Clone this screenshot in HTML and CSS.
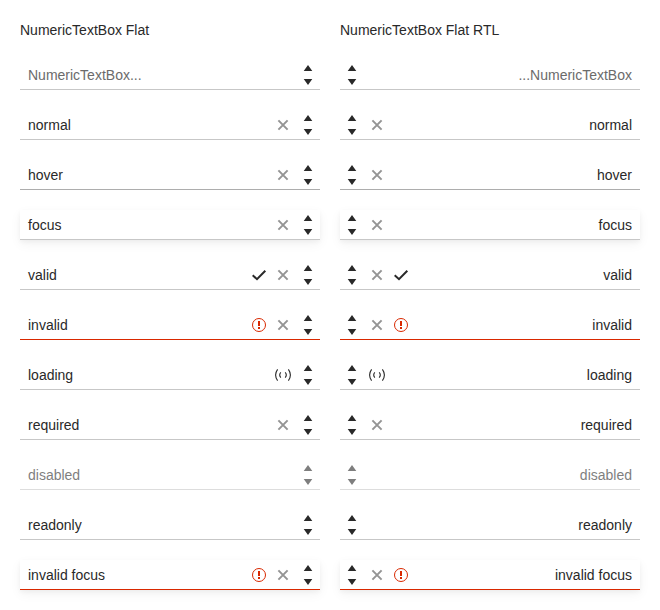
FILE: index.html
```
<!DOCTYPE html>
<html lang="en">
<head>
<meta charset="utf-8">
<title>NumericTextBox Flat</title>
<link rel="stylesheet" href="styles.css">
</head>
<body>
<svg class="sprite" aria-hidden="true">
  <symbol id="spin" viewBox="0 0 24 28"><path d="M12 4L16.3 10H7.7ZM7.7 18H16.3L12 24Z" fill="currentColor"/></symbol>
  <symbol id="clear" viewBox="0 0 16 16"><path d="M3.4 3.4L12.6 12.6M12.6 3.4L3.4 12.6" stroke="currentColor" stroke-width="2" fill="none"/></symbol>
  <symbol id="check" viewBox="0 0 16 16"><path d="M1.7 8.2L6 12.2L14.3 3.8" stroke="currentColor" stroke-width="2" fill="none"/></symbol>
  <symbol id="error" viewBox="0 0 16 16"><circle cx="8" cy="8" r="6.5" stroke="currentColor" fill="none"/><path d="M7 4H9V9H7ZM7 10H9V12H7Z" fill="currentColor"/></symbol>
  <symbol id="loading" viewBox="0 0 16 16"><path d="M2.6 2.4Q-1.4 8 2.6 13.6M13.4 2.4Q17.4 8 13.4 13.6M5.8 5.4Q3.6 8 5.8 10.6M10.2 5.4Q12.4 8 10.2 10.6" stroke="currentColor" stroke-width="1.1" fill="none"/></symbol>
</svg>
<main class="grid" id="grid"></main>
<script src="script.js"></script>
</body>
</html>
```
FILE: styles.css
```
body {
  margin: 0;
  background: #fff;
  color: #292929;
  font: 14px/20px "Liberation Sans", Arial, sans-serif;
}
.sprite { position: absolute; width: 0; height: 0; }
.grid {
  display: grid;
  grid-template-columns: 300px 300px;
  gap: 20px;
  padding: 20px;
}
.column { display: flex; flex-direction: column; gap: 20px; }
.title { height: 20px; }
.box {
  box-sizing: border-box;
  height: 30px;
  display: flex;
  align-items: center;
  border-bottom: 1px solid #c7c7c7;
  background: #fff;
}
.rtl .box { flex-direction: row-reverse; }
.value { flex: 1; padding: 0 8px; }
.rtl .value { text-align: right; }
.placeholder .value { color: #6b6b6b; }
.hover { border-color: #adadad; }
.focus { box-shadow: 0 2px 4px rgba(0, 0, 0, .04), 0 4px 12px rgba(0, 0, 0, .05); }
.invalid { border-color: #d92800; }
.disabled { opacity: .6; }
.slot {
  width: 24px;
  height: 28px;
  display: flex;
  align-items: center;
  justify-content: center;
}
.slot svg { width: 16px; height: 16px; flex: none; }
.slot.spin svg { width: 24px; height: 28px; }
.slot.spin { margin-left: 1px; }
.rtl .slot.spin { margin: 0 1px 0 0; }
.slot.clear { color: #949494; }
.slot.error { color: #d92800; }
```
FILE: script.js
```
const rows = [
  ["NumericTextBox...", "placeholder", []],
  ["normal", "", ["clear"]],
  ["hover", "hover", ["clear"]],
  ["focus", "focus", ["clear"]],
  ["valid", "", ["check", "clear"]],
  ["invalid", "invalid", ["error", "clear"]],
  ["loading", "", ["loading"]],
  ["required", "", ["clear"]],
  ["disabled", "disabled", []],
  ["readonly", "", []],
  ["invalid focus", "invalid focus", ["error", "clear"]]
];

function column(title, rtl) {
  const boxes = rows.map(([text, state, icons]) => {
    const label = rtl && state === "placeholder" ? "...NumericTextBox" : text;
    const slots = [...icons, "spin"].map(i => `<span class="slot ${i}"><svg><use href="#${i}"/></svg></span>`).join("");
    return `<div class="box ${state}"><span class="value">${label}</span>${slots}</div>`;
  }).join("");
  return `<section class="column ${rtl ? "rtl" : ""}"><div class="title">${title}</div>${boxes}</section>`;
}

document.getElementById("grid").innerHTML =
  column("NumericTextBox Flat", false) + column("NumericTextBox Flat RTL", true);
```
